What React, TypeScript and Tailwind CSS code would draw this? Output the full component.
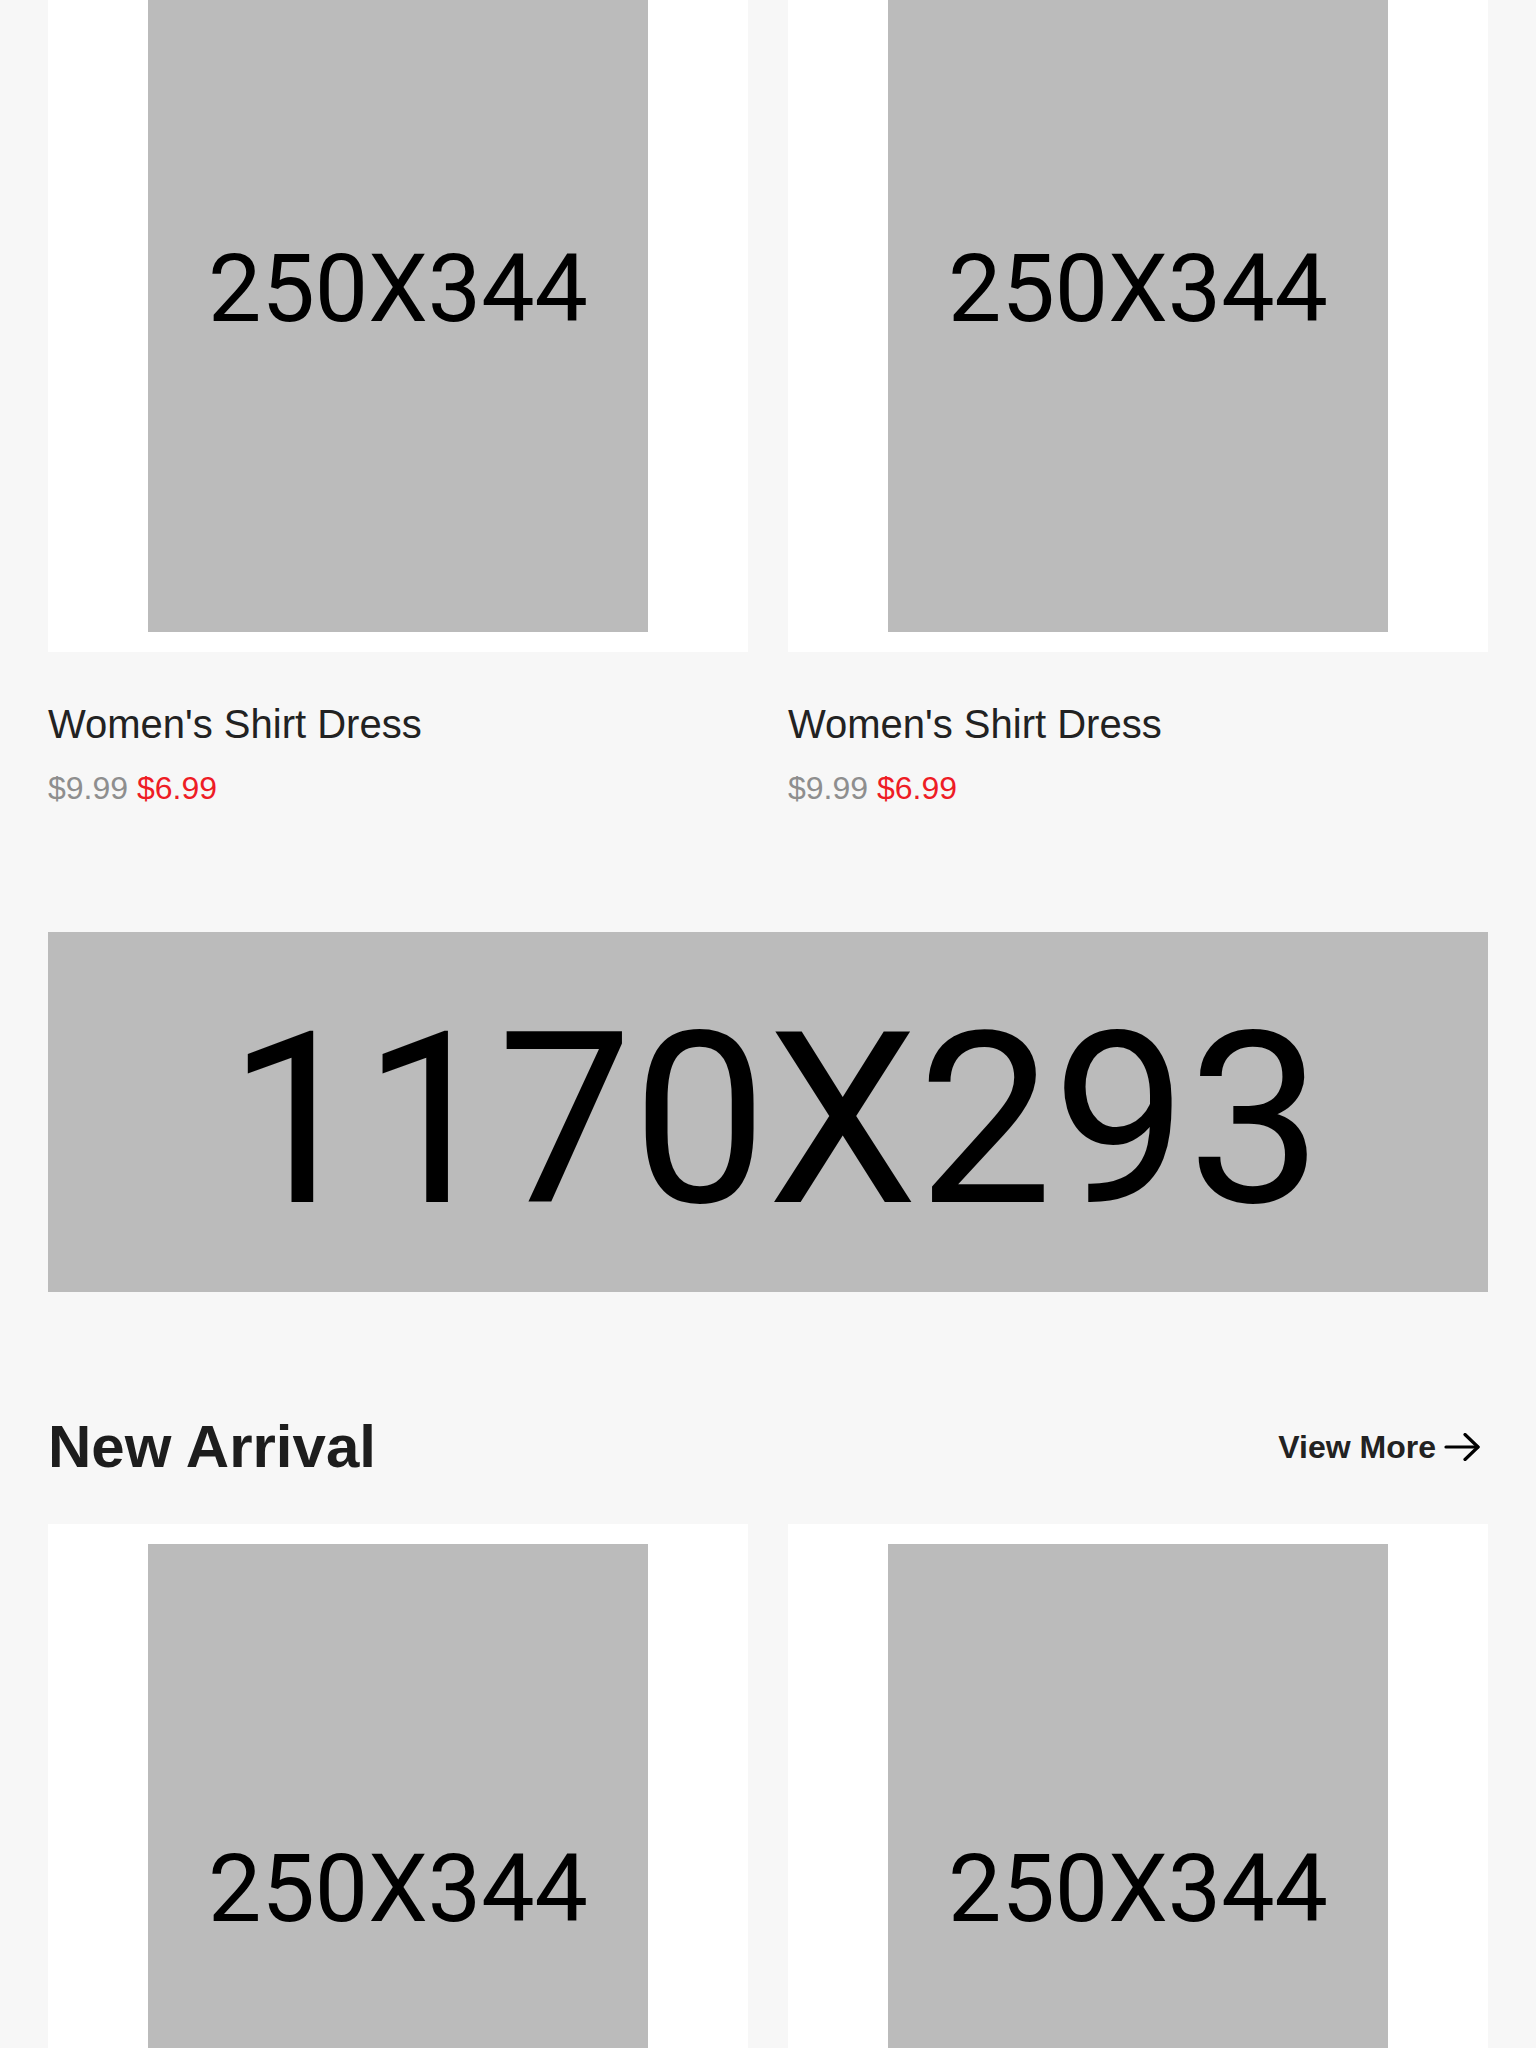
import React from 'react';

type Product = {
	id: number;
	name: string;
	oldPrice: string;
	price: string;
};

const topProducts: Product[] = [
	{ id: 1, name: "Women's Shirt Dress", oldPrice: '$9.99', price: '$6.99' },
	{ id: 2, name: "Women's Shirt Dress", oldPrice: '$9.99', price: '$6.99' },
];

const newArrivals: Product[] = [
	{ id: 3, name: "Women's Shirt Dress", oldPrice: '$9.99', price: '$6.99' },
	{ id: 4, name: "Women's Shirt Dress", oldPrice: '$9.99', price: '$6.99' },
];

function Placeholder() {
	return (
		<div className="flex h-[688px] w-[500px] items-center justify-center bg-[#bbbbbb]">
			<span className="font-['Roboto',sans-serif] text-[95px] leading-none text-black">250X344</span>
		</div>
	);
}

function ProductCard({ product }: { product: Product }) {
	return (
		<div>
			<div className="flex justify-center bg-white py-5">
				<Placeholder />
			</div>
			<h3 className="mt-12 text-[40px] leading-[48px] text-[#222222]">{product.name}</h3>
			<p className="mt-5 text-[32px] leading-[40px]">
				<span className="text-[#8e8e8e]">{product.oldPrice}</span>{' '}
				<span className="text-[#ee1c25]">{product.price}</span>
			</p>
		</div>
	);
}

export default function App() {
	return (
		<div className="min-h-[2048px] overflow-hidden bg-[#f7f7f7] font-['Liberation_Sans',Arial,sans-serif]">
			<div className="-mt-[76px] px-12">
				{/* products scrolled partly out of view */}
				<div className="grid grid-cols-2 gap-10">
					{topProducts.map((p) => (
						<ProductCard key={p.id} product={p} />
					))}
				</div>

				{/* promo banner */}
				<div className="mt-[124px] flex h-[360px] items-center justify-center bg-[#bbbbbb] pt-[16px] pl-[14px]">
					<span className="font-['Roboto',sans-serif] text-[240px] leading-none text-black">1170X293</span>
				</div>

				<div className="mt-[119px] flex h-[72px] items-center justify-between">
					<h2 className="text-[60px] font-bold leading-[72px] text-[#1d1d1d]">New Arrival</h2>
					<a href="#" className="flex items-center gap-2 pr-2 text-[32px] font-bold leading-[40px] text-[#222222]">
						View More
						<svg width="36" height="28" viewBox="0 0 36 28" fill="none" stroke="black" strokeWidth="3.2" strokeLinecap="round" strokeLinejoin="round">
							<path d="M2 14H34" />
							<path d="M21 1.5L34 14L21 26.5" />
						</svg>
					</a>
				</div>

				<div className="mt-[41px] grid grid-cols-2 gap-10">
					{newArrivals.map((p) => (
						<ProductCard key={p.id} product={p} />
					))}
				</div>
			</div>
		</div>
	);
}
